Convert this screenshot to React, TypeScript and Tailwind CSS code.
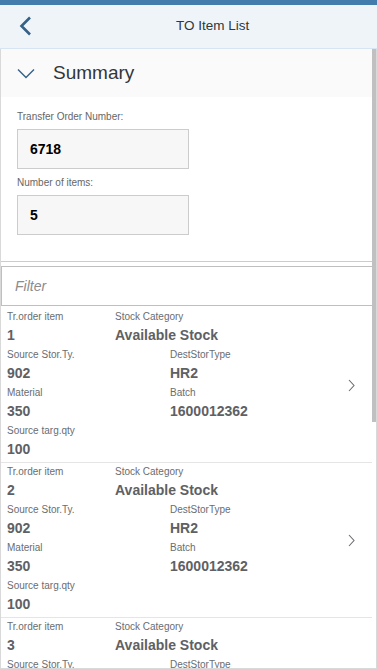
import React from "react";

type Item = {
  no: string;
  cat: string;
  src: string;
  dest: string;
  mat: string;
  batch: string;
  qty: string;
};

const items: Item[] = [
  { no: "1", cat: "Available Stock", src: "902", dest: "HR2", mat: "350", batch: "1600012362", qty: "100" },
  { no: "2", cat: "Available Stock", src: "902", dest: "HR2", mat: "350", batch: "1600012362", qty: "100" },
  { no: "3", cat: "Available Stock", src: "902", dest: "HR2", mat: "350", batch: "1600012362", qty: "100" },
];

function Pair({ label, value, w }: { label: string; value: string; w?: string }) {
  return (
    <div className={w ? `${w} shrink-0` : "shrink-0"}>
      <div className="h-[16px] leading-[16px] text-[10px] text-[#6a6d70] whitespace-nowrap">{label}</div>
      <div className="h-[20px] leading-[20px] text-[14px] font-bold text-[#5e6164] whitespace-nowrap">{value}</div>
    </div>
  );
}

function ListItem({ it }: { it: Item }) {
  return (
    <div className="relative border-b border-[#e5e5e5] pl-[6px] pt-[1px] pb-[3px]">
      <div className="flex flex-col gap-[2px]">
        <div className="flex">
          <Pair label="Tr.order item" value={it.no} w="w-[108px]" />
          <Pair label="Stock Category" value={it.cat} />
        </div>
        <div className="flex">
          <Pair label="Source Stor.Ty." value={it.src} w="w-[163px]" />
          <Pair label="DestStorType" value={it.dest} />
        </div>
        <div className="flex">
          <Pair label="Material" value={it.mat} w="w-[163px]" />
          <Pair label="Batch" value={it.batch} />
        </div>
        <div className="flex">
          <Pair label="Source targ.qty" value={it.qty} />
        </div>
      </div>
      <div className="absolute right-[17px] top-0 bottom-0 flex items-center">
        <svg width="7" height="13" viewBox="0 0 7 13" fill="none">
          <path d="M1 1 L6 6.5 L1 12" stroke="#6a6d70" strokeWidth="1.1" />
        </svg>
      </div>
    </div>
  );
}

export default function App() {
  return (
    <div
      className="relative w-[377px] h-[669px] overflow-hidden bg-white"
      style={{ fontFamily: '"Liberation Sans", Arial, sans-serif' }}
    >
      <div className="h-[5px] bg-[#427cac]" />
      <div className="h-[44px] bg-[#eff4f9] border-b border-[#d6e4f3] flex items-center relative">
        <div className="absolute left-[19px] top-[11px]">
          <svg width="13" height="20" viewBox="0 0 13 20" fill="none">
            <path d="M11 1.5 L2.5 10 L11 18.5" stroke="#346187" strokeWidth="2.6" strokeLinecap="butt" />
          </svg>
        </div>
        <div className="ml-[176px] text-[13.5px] text-[#32363a]">TO Item List</div>
      </div>

      <div className="h-[620px] border-l border-r border-b border-[#d9d9d9] overflow-hidden">
        <div className="h-[48px] bg-[#fafafa] flex items-center pr-[4px]">
          <svg className="ml-[16px]" width="18" height="11" viewBox="0 0 18 11" fill="none">
            <path d="M1 1.5 L9 9.5 L17 1.5" stroke="#346187" strokeWidth="1.4" />
          </svg>
          <span className="ml-[18px] text-[19px] text-[#32363a]">Summary</span>
        </div>

        <div className="pl-[16px] pt-[13px] pb-[26px] mr-[4px]">
          <div className="h-[14px] leading-[14px] text-[10px] text-[#666666]">Transfer Order Number:</div>
          <div className="mt-[5px] w-[172px] h-[40px] bg-[#f7f7f7] border border-[#cccccc] flex items-center pl-[12px] text-[14px] font-bold text-[#000000]">
            6718
          </div>
          <div className="mt-[7px] h-[14px] leading-[14px] text-[10px] text-[#666666]">Number of items:</div>
          <div className="mt-[5px] w-[172px] h-[40px] bg-[#f7f7f7] border border-[#cccccc] flex items-center pl-[12px] text-[14px] font-bold text-[#000000]">
            5
          </div>
        </div>

        <div className="h-px bg-[#cccccc] mr-[3px]" />
        <div className="pt-[4px]">
          <div className="h-[40px] border border-[#bfbfbf] flex items-center pl-[13px] text-[14px] italic text-[#8c8c8c]">
            Filter
          </div>
        </div>

        <div className="pt-[2px] mr-[4px]">
          {items.map((it, i) => (
            <ListItem key={i} it={it} />
          ))}
        </div>
      </div>

      <div className="absolute left-[372px] top-[49px] w-[4px] h-[373px] bg-[#c0c0c0]" />
    </div>
  );
}
